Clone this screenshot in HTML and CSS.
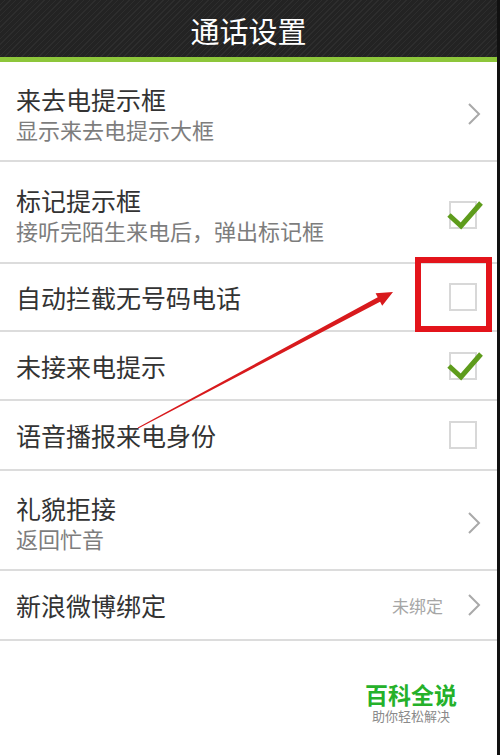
FILE: index.html
```html
<!doctype html>
<html lang="zh-CN">
<head>
  <meta charset="UTF-8">
  <meta name="viewport" content="width=device-width, initial-scale=1.0">
  <title>通话设置</title>
  <link rel="stylesheet" href="styles.css">
</head>
<body>
  <div class="screen">
    <div class="header">
      <div class="title">通话设置</div>
    </div>

    <div class="list">
      <div class="row two">
        <div class="text">
          <div class="name">来去电提示框</div>
          <div class="desc">显示来去电提示大框</div>
        </div>
        <svg class="chevron" width="14" height="24" viewBox="0 0 14 24"><path d="M2 2 L12 12 L2 22"/></svg>
      </div>
      <div class="row two r2">
        <div class="text">
          <div class="name">标记提示框</div>
          <div class="desc">接听完陌生来电后，弹出标记框</div>
        </div>
        <div class="check on">
          <svg width="38" height="32" viewBox="0 0 38 32"><path d="M2 16 L14 27 L34 4"/></svg>
        </div>
      </div>
      <div class="row one r3">
        <div class="text">
          <div class="name">自动拦截无号码电话</div>
        </div>
        <div class="check"></div>
      </div>
      <div class="row one r4">
        <div class="text">
          <div class="name">未接来电提示</div>
        </div>
        <div class="check on">
          <svg width="38" height="32" viewBox="0 0 38 32"><path d="M2 16 L14 27 L34 4"/></svg>
        </div>
      </div>
      <div class="row one r5">
        <div class="text">
          <div class="name">语音播报来电身份</div>
        </div>
        <div class="check"></div>
      </div>
      <div class="row two">
        <div class="text">
          <div class="name">礼貌拒接</div>
          <div class="desc">返回忙音</div>
        </div>
        <svg class="chevron" width="14" height="24" viewBox="0 0 14 24"><path d="M2 2 L12 12 L2 22"/></svg>
      </div>
      <div class="row one r5">
        <div class="text">
          <div class="name">新浪微博绑定</div>
        </div>
        <span class="state">未绑定</span>
        <svg class="chevron" width="14" height="24" viewBox="0 0 14 24"><path d="M2 2 L12 12 L2 22"/></svg>
      </div>
    </div>

    <div class="mark">
      <div class="mark-name">百科全说</div>
      <div class="mark-sub">助你轻松解决</div>
    </div>

    <!-- annotation -->
    <div class="highlight"></div>
    <svg class="arrow" width="500" height="755" viewBox="0 0 500 755">
      <polygon points="137.8,427.6 377.7,297.3 375.6,293.3 393,292 382.2,305.7 380.1,301.7 138.2,428.4"/>
    </svg>
  </div>
</body>
</html>
```

FILE: styles.css
```css
html, body {
    margin: 0;
    padding: 0;
}
body {
    background: #fff;
    font-family: "Noto Sans CJK SC", "Noto Sans", sans-serif;
}
.screen {
    position: relative;
    width: 500px;
    height: 755px;
    box-sizing: border-box;
    border-right: 3px solid #111;
    background: #fff;
    overflow: hidden;
}
.header {
    height: 57px;
    border-bottom: 5px solid #8dc63a;
    background-color: #232323;
    background-image: repeating-linear-gradient(135deg, #232323 0, #232323 3px, #2d2d2d 3px, #2d2d2d 4px);
    display: flex;
    align-items: center;
    justify-content: center;
}
.title {
    color: #fff;
    font-size: 29px;
    line-height: 57px;
    padding-top: 4px;
}
.list {
    background: #fff;
}
.row {
    display: flex;
    align-items: center;
    box-sizing: border-box;
    padding: 0 16px;
    border-bottom: 2px solid #dcdcdc;
}
.row.two {
    height: 100px;
    padding-top: 6px;
}
.row.two.r2 {
    height: 102px;
}
.row.one {
    height: 68px;
}
.row.one.r4 {
    height: 69px;
}
.row.one.r5 {
    height: 70px;
}
.text {
    flex: 1;
}
.name {
    font-size: 25px;
    line-height: 30px;
    color: #333;
}
.desc {
    font-size: 22px;
    line-height: 30px;
    color: #7d7d7d;
}
.chevron {
    display: block;
    fill: none;
    stroke: #a9a9a9;
    stroke-width: 2;
}
.state {
    font-size: 17px;
    color: #a6a6a6;
    margin-right: 24px;
}
.check {
    position: relative;
    width: 28px;
    height: 28px;
    box-sizing: border-box;
    border: 2px solid #d8d8d8;
    margin-right: 4px;
}
.check svg {
    position: absolute;
    left: -4px;
    top: -4px;
    fill: none;
    stroke: #5e9c1c;
    stroke-width: 5;
    stroke-linejoin: miter;
}
.mark {
    width: 96px;
    margin: 40px 38px 0 auto;
    text-align: center;
}
.mark-name {
    font-size: 23px;
    font-weight: bold;
    line-height: 26px;
    color: #25b12a;
}
.mark-sub {
    font-size: 13px;
    line-height: 18px;
    color: #8a8a8a;
}
.highlight {
    position: absolute;
    left: 415px;
    top: 257px;
    width: 77px;
    height: 75px;
    box-sizing: border-box;
    border: 6px solid #e3141b;
}
.arrow {
    position: absolute;
    left: 0;
    top: 0;
}
.arrow polygon {
    fill: #d81a1d;
}
```
